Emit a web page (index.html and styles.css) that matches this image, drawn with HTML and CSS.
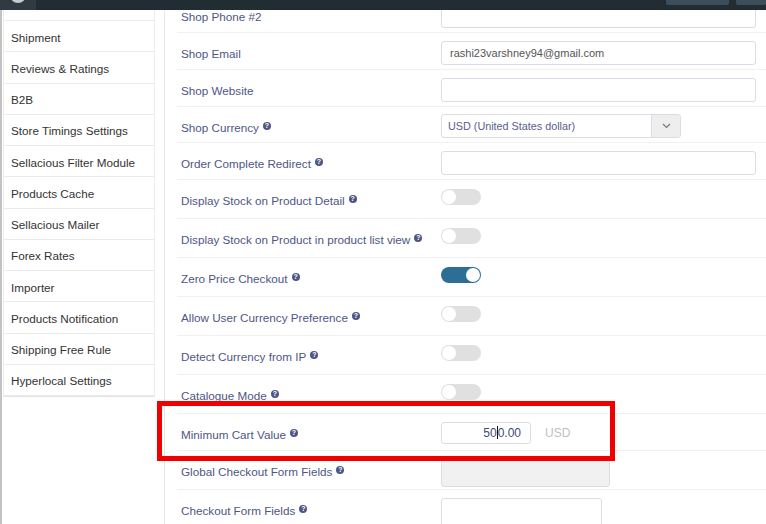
FILE: index.html
```html
<!DOCTYPE html>
<html lang="en">
<head>
<meta charset="utf-8">
<title>Shop settings</title>
<link rel="stylesheet" href="styles.css">
</head>
<body>
<header class="topbar">
  <div class="brand"><span class="logo"></span></div>
  <div class="top-actions"><span class="tbtn tbtn-a"></span><span class="tbtn tbtn-b"></span></div>
</header>
<div class="page">
  <aside class="side-col">
    <ul class="side-menu">
      <li></li>
      <li>Shipment</li>
      <li>Reviews &amp; Ratings</li>
      <li>B2B</li>
      <li>Store Timings Settings</li>
      <li>Sellacious Filter Module</li>
      <li>Products Cache</li>
      <li>Sellacious Mailer</li>
      <li>Forex Rates</li>
      <li>Importer</li>
      <li>Products Notification</li>
      <li>Shipping Free Rule</li>
      <li>Hyperlocal Settings</li>
    </ul>
  </aside>
  <main class="content">
    <div class="form">
      <div class="row">
        <div class="label">Shop Phone #2</div>
        <div class="input"></div>
      </div>
      <div class="row">
        <div class="label">Shop Email</div>
        <div class="input">rashi23varshney94@gmail.com</div>
      </div>
      <div class="row">
        <div class="label">Shop Website</div>
        <div class="input"></div>
      </div>
      <div class="row row-select">
        <div class="label">Shop Currency<span class="help">?</span></div>
        <div class="select">
          <span class="select-text">USD (United States dollar)</span>
          <span class="select-btn"><svg width="9" height="6" viewBox="0 0 9 6"><polyline points="1,1 4.5,4.5 8,1" fill="none" stroke="#7a7a7a" stroke-width="1.2"/></svg></span>
        </div>
      </div>
      <div class="row">
        <div class="label">Order Complete Redirect<span class="help">?</span></div>
        <div class="input"></div>
      </div>
      <div class="row toggle-row">
        <div class="label">Display Stock on Product Detail<span class="help">?</span></div>
        <div class="toggle"><span class="knob"></span></div>
      </div>
      <div class="row toggle-row">
        <div class="label">Display Stock on Product in product list view<span class="help">?</span></div>
        <div class="toggle"><span class="knob"></span></div>
      </div>
      <div class="row toggle-row">
        <div class="label">Zero Price Checkout<span class="help">?</span></div>
        <div class="toggle on"><span class="knob"></span></div>
      </div>
      <div class="row toggle-row">
        <div class="label">Allow User Currency Preference<span class="help">?</span></div>
        <div class="toggle"><span class="knob"></span></div>
      </div>
      <div class="row toggle-row">
        <div class="label">Detect Currency from IP<span class="help">?</span></div>
        <div class="toggle"><span class="knob"></span></div>
      </div>
      <div class="row toggle-row">
        <div class="label">Catalogue Mode<span class="help">?</span></div>
        <div class="toggle"><span class="knob"></span></div>
      </div>
      <div class="row row-min">
        <div class="label">Minimum Cart Value<span class="help">?</span></div>
        <div class="min-wrap">
          <div class="input input-min">50<span class="caret"></span>0.00</div>
          <span class="addon">USD</span>
        </div>
      </div>
      <div class="row row-global">
        <div class="label">Global Checkout Form Fields<span class="help">?</span></div>
        <div class="box box-disabled"></div>
      </div>
      <div class="row row-last">
        <div class="label">Checkout Form Fields<span class="help">?</span></div>
        <div class="box box-white"></div>
      </div>
    </div>
  </main>
</div>
<div class="highlight"></div>
</body>
</html>
```
FILE: styles.css
```css
* { box-sizing: border-box; }
html, body { margin: 0; padding: 0; }
body {
  font-family: "Liberation Sans", Arial, sans-serif;
  font-size: 12px;
  background: #fff;
  width: 766px;
  height: 524px;
  overflow: hidden;
}

.topbar {
  position: fixed;
  top: 0; left: 0; right: 0;
  height: 10px;
  background: #222d33;
  display: flex;
  justify-content: space-between;
  z-index: 5;
}
.brand {
  width: 36px;
  height: 10px;
  background: #303b41;
  display: flex;
  justify-content: center;
  overflow: hidden;
}
.logo {
  width: 16px;
  height: 16px;
  margin-top: -13px;
  border-radius: 50%;
  background: #c5cace;
}
.top-actions {
  display: flex;
  gap: 7px;
  height: 5px;
}
.tbtn {
  height: 5px;
  background: #3c4e59;
  border-radius: 0 0 2px 2px;
}
.tbtn-a { width: 63px; }
.tbtn-b { width: 30px; }

.page {
  display: flex;
  height: 524px;
  overflow: hidden;
}

.side-col {
  width: 164px;
  flex: none;
  border-left: 2px solid #c3c3c3;
  padding-left: 1px;
}
.side-menu {
  list-style: none;
  margin: -10.25px 0 0;
  padding: 0;
  width: 152px;
  border-left: 1px solid #ececec;
  border-right: 1px solid #ececec;
  border-bottom: 1px solid #e2e2e2;
}
.side-menu li {
  height: 31.25px;
  border-bottom: 1px solid #ebebeb;
  display: flex;
  align-items: center;
  padding: 2px 0 0 7px;
  color: #333;
  font-size: 11.7px;
  background: #fff;
}

.content {
  flex: 1;
  border-left: 1px solid #e6e6e6;
  padding-left: 12px;
}
.form { margin-top: -4px; }

.row {
  display: flex;
  align-items: flex-start;
  padding: 8px 0 4px 4px;
  border-bottom: 1px solid #f1f1f1;
}
.label {
  width: 260px;
  flex: none;
  padding-top: 6px;
  line-height: 14px;
  font-size: 11.7px;
  color: #4e5686;
  white-space: nowrap;
}
.help {
  display: inline-block;
  width: 8px;
  height: 8px;
  border-radius: 50%;
  background: #4e5686;
  color: #fff;
  font-size: 7px;
  font-weight: bold;
  line-height: 8px;
  text-align: center;
  vertical-align: 4px;
  margin-left: 4px;
}

.input {
  width: 315px;
  height: 24px;
  border: 1px solid #dcdce4;
  border-radius: 3px;
  padding: 0 8px;
  font-size: 11px;
  line-height: 22px;
  color: #555;
  background: #fff;
}

.row-select { padding-top: 7px; }
.row-select .label { padding-top: 7px; }
.select {
  width: 240px;
  height: 24px;
  border: 1px solid #dcdce4;
  border-radius: 3px;
  display: flex;
  overflow: hidden;
}
.select-text {
  flex: 1;
  padding-left: 6px;
  line-height: 22px;
  font-size: 10.8px;
  color: #585e8c;
}
.select-btn {
  width: 29px;
  background: #eeeeee;
  border-left: 1px solid #dcdce4;
  display: flex;
  align-items: center;
  justify-content: center;
}

.toggle-row { padding-bottom: 10px; }
.toggle {
  margin-top: 1px;
  width: 40px;
  height: 16px;
  border-radius: 8px;
  background: #e0e0e0;
  padding: 1px;
  display: flex;
}
.toggle .knob {
  width: 14px;
  height: 14px;
  border-radius: 50%;
  background: #fff;
}
.toggle.on {
  background: #2c6e96;
  justify-content: flex-end;
}

.row-min { padding-bottom: 6px; }
.min-wrap { display: flex; align-items: center; }
.input-min {
  width: 90px;
  height: 22px;
  line-height: 20px;
  text-align: right;
  padding-right: 9px;
  font-size: 12px;
  color: #3a4a7a;
}
.caret {
  display: inline-block;
  width: 1px;
  height: 13px;
  background: #111;
  vertical-align: -2px;
}
.addon {
  margin-left: 14px;
  color: #c0c0c0;
  font-size: 12px;
}

.row-global { padding-bottom: 2px; }
.box {
  border: 1px solid #dcdce4;
  border-radius: 3px;
}
.box-disabled {
  width: 169px;
  height: 28px;
  background: #f1f1f1;
}
.box-white {
  width: 161px;
  height: 40px;
  background: #fff;
}
.row-last { border-bottom: none; }

.highlight {
  position: absolute;
  left: 157px;
  top: 401px;
  width: 458px;
  height: 60px;
  border: 5px solid #f20000;
  z-index: 4;
}
```
